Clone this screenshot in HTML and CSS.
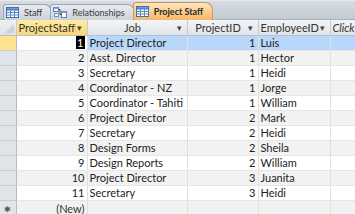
FILE: index.html
```html
<!DOCTYPE html>
<html>
<head>
<meta charset="utf-8">
<link rel="stylesheet" href="styles.css">
</head>
<body>
<div class="tabbar">
  <div class="tab">
    <svg class="ico" width="13" height="11" viewBox="0 0 13 11"><rect x="0.5" y="0.5" width="12" height="10" fill="#fff" stroke="#3c6fb4"/><rect x="0.5" y="0.5" width="12" height="2.5" fill="#6e9bd6" stroke="#3c6fb4"/><path d="M0.5 5.5H12.5M0.5 8H12.5M4.5 3V10.5M8.5 3V10.5" stroke="#5b88c6" fill="none"/></svg>
    <span>Staff</span>
  </div>
  <div class="tab">
    <svg class="ico" width="14" height="11" viewBox="0 0 14 11"><rect x="0.5" y="0.5" width="5" height="4" fill="#fff" stroke="#5a7fb3"/><rect x="0.5" y="0.5" width="5" height="1.5" fill="#7ea3d6"/><rect x="8.5" y="4.5" width="5" height="6" fill="#fff" stroke="#5a7fb3"/><rect x="8.5" y="4.5" width="5" height="1.5" fill="#7ea3d6"/><path d="M5.5 2.5H7V7.5H8.5" stroke="#404a58" fill="none"/><rect x="1.5" y="6.5" width="4" height="3" fill="#fff" stroke="#7d8fa8"/></svg>
    <span>Relationships</span>
  </div>
  <div class="tab active">
    <svg class="ico" width="13" height="11" viewBox="0 0 13 11"><rect x="0.5" y="0.5" width="12" height="10" fill="#fff" stroke="#3c6fb4"/><rect x="0.5" y="0.5" width="12" height="2.5" fill="#6e9bd6" stroke="#3c6fb4"/><path d="M0.5 5.5H12.5M0.5 8H12.5M4.5 3V10.5M8.5 3V10.5" stroke="#5b88c6" fill="none"/></svg>
    <span>Project Staff</span>
  </div>
</div>
<table class="grid">
  <colgroup>
    <col class="c-sel"><col class="c-id"><col class="c-job"><col class="c-pid"><col class="c-eid"><col class="c-add">
  </colgroup>
  <thead>
    <tr>
      <th class="sel corner"><span class="tri"></span></th>
      <th class="hcur"><div class="hc"><span class="ht">ProjectStaffI</span><span class="dd">▾</span></div></th>
      <th><div class="hc"><span class="ht ctr">Job</span><span class="dd">▾</span></div></th>
      <th><div class="hc"><span class="ht ctr">ProjectID</span><span class="dd">▾</span></div></th>
      <th><div class="hc"><span class="ht ctr">EmployeeID</span><span class="dd">▾</span></div></th>
      <th><div class="hc"><span class="ht add">Click to Add</span></div></th>
    </tr>
  </thead>
  <tbody>
    <tr class="cur"><td class="sel"></td><td class="num first"><span class="hl">1</span></td><td>Project Director</td><td class="num">1</td><td>Luis</td><td></td></tr>
    <tr class="alt"><td class="sel"></td><td class="num">2</td><td>Asst. Director</td><td class="num">1</td><td>Hector</td><td></td></tr>
    <tr><td class="sel"></td><td class="num">3</td><td>Secretary</td><td class="num">1</td><td>Heidi</td><td></td></tr>
    <tr class="alt"><td class="sel"></td><td class="num">4</td><td>Coordinator - NZ</td><td class="num">1</td><td>Jorge</td><td></td></tr>
    <tr><td class="sel"></td><td class="num">5</td><td>Coordinator - Tahiti</td><td class="num">1</td><td>William</td><td></td></tr>
    <tr class="alt"><td class="sel"></td><td class="num">6</td><td>Project Director</td><td class="num">2</td><td>Mark</td><td></td></tr>
    <tr><td class="sel"></td><td class="num">7</td><td>Secretary</td><td class="num">2</td><td>Heidi</td><td></td></tr>
    <tr class="alt"><td class="sel"></td><td class="num">8</td><td>Design Forms</td><td class="num">2</td><td>Sheila</td><td></td></tr>
    <tr><td class="sel"></td><td class="num">9</td><td>Design Reports</td><td class="num">2</td><td>William</td><td></td></tr>
    <tr class="alt"><td class="sel"></td><td class="num">10</td><td>Project Director</td><td class="num">3</td><td>Juanita</td><td></td></tr>
    <tr><td class="sel"></td><td class="num">11</td><td>Secretary</td><td class="num">3</td><td>Heidi</td><td></td></tr>
    <tr class="alt newrow"><td class="sel"><span class="star">✱</span></td><td class="num newtxt">(New)</td><td></td><td></td><td></td><td></td></tr>
  </tbody>
</table>
</body>
</html>
```
FILE: styles.css
```css
html, body {
  margin: 0;
  padding: 0;
  background: #fff;
  overflow: hidden;
  width: 355px;
  height: 214px;
  font-family: Lato, "Open Sans", sans-serif;
}

.tabbar {
  height: 20px;
  box-sizing: border-box;
  background: linear-gradient(#d6dbe2, #c4cad3);
  border-top: 1px solid #e6e9ee;
  border-bottom: 1px solid #a9b1bd;
  display: flex;
  align-items: flex-end;
  padding-left: 3px;
}

.tab {
  height: 16px;
  display: flex;
  align-items: center;
  gap: 5px;
  padding: 0 9px 0 2px;
  margin-right: -2px;
  margin-bottom: -1px;
  background: linear-gradient(#e9ecf0, #cdd2da);
  border: 1px solid #9ea6b3;
  border-bottom: none;
  border-radius: 3px 8px 0 0;
  color: #3b3b3b;
  box-sizing: border-box;
  font-family: Lato, sans-serif;
  font-size: 9px;
  position: relative;
}

.tab .ico { flex: none; }

.tab.active {
  height: 18px;
  background: linear-gradient(#fde6bd, #f8b765);
  border-color: #c79a5a;
  font-weight: bold;
  color: #2a2a2a;
  z-index: 1;
}

.grid {
  border-collapse: collapse;
  table-layout: fixed;
  width: 370px;
  font-size: 11px;
  color: #222;
}

.c-sel { width: 16px; }
.c-id { width: 71px; }
.c-job { width: 100px; }
.c-pid { width: 71px; }
.c-eid { width: 72px; }
.c-add { width: 40px; }

th {
  height: 15px;
  padding: 0;
  background: linear-gradient(#f3f4f6, #e0e3e8);
  border-right: 1px solid #c5c9d0;
  border-bottom: 1px solid #b9bfc8;
  font-weight: normal;
  color: #333;
  text-align: left;
}

th.hcur {
  background: linear-gradient(#fdeaa8, #f9d974);
}

.hc {
  display: flex;
  align-items: center;
  height: 15px;
  padding: 0 3px 0 2px;
  white-space: nowrap;
  overflow: hidden;
}

.ht { flex: 1; overflow: hidden; }
.ht.ctr { text-align: center; }
.ht.add { font-style: italic; color: #333; }
.dd { font-size: 9px; color: #444; flex: none; width: 8px; text-align: center; }

th.corner {
  background: linear-gradient(#eef0f3, #dde1e6);
  position: relative;
}
.tri {
  position: absolute;
  right: 2px;
  bottom: 2px;
  width: 0;
  height: 0;
  border-left: 9px solid transparent;
  border-bottom: 9px solid #cdd2d9;
}

td {
  height: 14px;
  padding: 0 2px;
  border-right: 1px solid #e3e0d8;
  border-bottom: 1px solid #e8e6e0;
  white-space: nowrap;
  overflow: hidden;
  line-height: 14px;
}

tr.alt td { background: #f2f2f2; }

td.num { text-align: right; padding-right: 2px; }

td.sel {
  background: #e1e4e9 !important;
  border-right: 1px solid #b6bcc6;
  border-bottom: 1px solid #c7ccd3;
  padding: 0;
  text-align: center;
}

tr.cur td { background: #b8d8fb; }
tr.cur td.sel { background: #fde38f !important; }
tr.cur td.first { background: #fff; }

.hl {
  background: #000;
  color: #fff;
  padding: 0 1px;
}

.star { font-size: 8px; color: #555; }
.newtxt { color: #333; }
```
